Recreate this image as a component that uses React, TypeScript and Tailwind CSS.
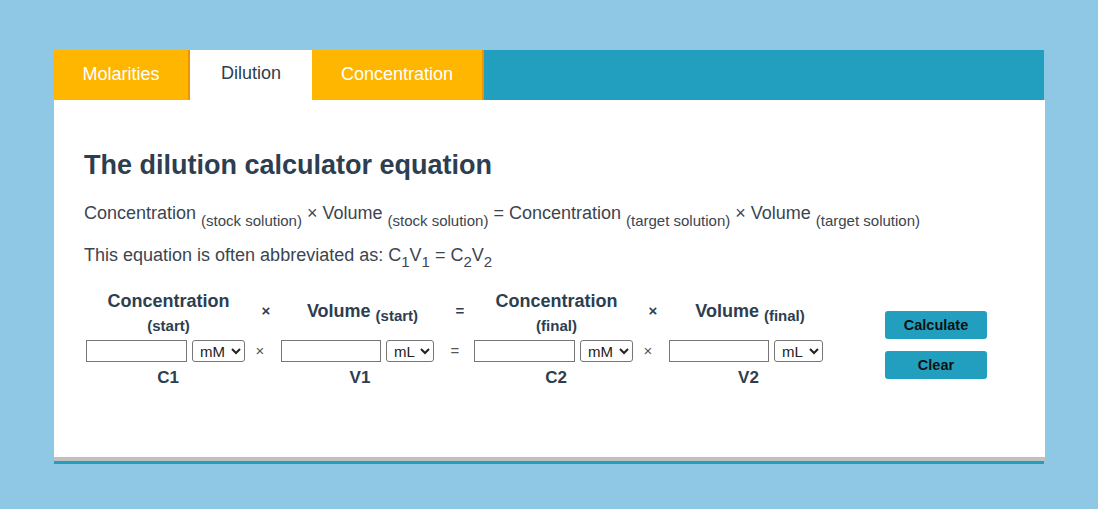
import { ReactNode } from "react";

const tabs = [
  { name: "Molarities", width: "w-[136px]", active: false },
  { name: "Dilution", width: "w-[122px]", active: true },
  { name: "Concentration", width: "w-[172px]", active: false },
];

function HeaderCell({ title, sub, shift }: { title: string; sub: string; shift: string }) {
  return (
    <div
      className={`flex h-[42px] items-center justify-center text-center text-[18px] font-bold leading-[1.15] text-[#2c3e50] ${shift}`}
    >
      <div>
        {title} <sub className="text-[15px]">({sub})</sub>
      </div>
    </div>
  );
}

function Op({ children, head, shift }: { children: ReactNode; head?: boolean; shift: string }) {
  return (
    <div
      className={
        head
          ? `flex h-[42px] items-center justify-center text-[15px] font-bold text-[#2c3e50] ${shift}`
          : `flex h-[22px] items-center justify-center text-[15px] text-[#555] ${shift}`
      }
    >
      {children}
    </div>
  );
}

function Field({ unit, inputW, selectW }: { unit: string; inputW: string; selectW: string }) {
  return (
    <div className="flex h-[22px] items-center">
      <input type="text" className={`h-[22px] ${inputW} border border-[#767676] bg-white`} />
      <select
        defaultValue={unit}
        className={`ml-[5px] h-[22px] ${selectW} rounded-[3px] border border-[#767676] bg-white pl-[3px] text-[15px] text-[#222]`}
      >
        <option>{unit}</option>
      </select>
    </div>
  );
}

function Label({ children }: { children: ReactNode }) {
  return (
    <div className="-mt-[2px] pl-[5px] text-center text-[17px] font-bold leading-[1.15] text-[#2c3e50]">
      {children}
    </div>
  );
}

function Sub({ children }: { children: ReactNode }) {
  return <sub className="-bottom-[0.45em] text-[15px]">{children}</sub>;
}

export default function App() {
  return (
    <div className="min-h-screen w-full bg-[#8ec8e5] pt-[50px] font-['Liberation_Sans',Arial,sans-serif]">
      <div className="ml-[54px] w-[991px]">
        {/* Tabs */}
        <div className="flex h-[50px] w-[990px] bg-[#229fbf]">
          {tabs.map((tab) =>
            tab.active ? (
              <div
                key={tab.name}
                className={`flex ${tab.width} items-center justify-center bg-white pb-[3px] text-[18px] text-[#2c3e50]`}
              >
                {tab.name}
              </div>
            ) : (
              <div
                key={tab.name}
                className={`flex ${tab.width} items-center justify-center border-r-2 border-[#f39200] bg-[#ffb600] pb-[1px] text-[18px] text-white`}
              >
                {tab.name}
              </div>
            )
          )}
        </div>

        {/* Content */}
        <div className="h-[361px] border-b-4 border-[#c0c0c0] bg-white pl-[30px] pt-[50px]">
          <h2 className="text-[27px] font-bold leading-[1.15] text-[#2c3e50]">The dilution calculator equation</h2>

          <p className="mt-[22px] text-[18px] leading-[1.15] text-[#3b4550]">
            Concentration <Sub>(stock solution)</Sub> × Volume <Sub>(stock solution)</Sub> = Concentration{" "}
            <Sub>(target solution)</Sub> × Volume <Sub>(target solution)</Sub>
          </p>

          <p className="mt-[21px] text-[18px] leading-[1.15] text-[#3b4550]">
            This equation is often abbreviated as: C<Sub>1</Sub>V<Sub>1</Sub> = C<Sub>2</Sub>V<Sub>2</Sub>
          </p>

          {/* Calculator */}
          <div className="ml-[2px] mt-[25px] grid grid-cols-[159px_36px_153px_40px_159px_36px_154px_62px_102px] gap-y-[8px]">
            <HeaderCell title="Concentration" sub="start" shift="pl-[6px]" />
            <Op head shift="pl-[6px]">×</Op>
            <HeaderCell title="Volume" sub="start" shift="pl-[10px]" />
            <Op head shift="pl-[12px]">=</Op>
            <HeaderCell title="Concentration" sub="final" shift="pl-[6px]" />
            <Op head shift="pl-[4px]">×</Op>
            <HeaderCell title="Volume" sub="final" shift="pl-[8px]" />
            <div />
            <div className="row-span-3 flex flex-col gap-[12px] pt-[21px]">
              <button className="h-[28px] w-[102px] rounded-[3px] bg-[#229fbf] text-[14.5px] font-bold text-[#111]">
                Calculate
              </button>
              <button className="h-[28px] w-[102px] rounded-[3px] bg-[#229fbf] text-[14.5px] font-bold text-[#111]">
                Clear
              </button>
            </div>

            <Field unit="mM" inputW="w-[101px]" selectW="w-[53px]" />
            <Op shift="pr-[6px]">×</Op>
            <Field unit="mL" inputW="w-[100px]" selectW="w-[48px]" />
            <Op shift="pl-[2px]">=</Op>
            <Field unit="mM" inputW="w-[101px]" selectW="w-[53px]" />
            <Op shift="pr-[6px]">×</Op>
            <Field unit="mL" inputW="w-[100px]" selectW="w-[49px]" />
            <div />

            <Label>C1</Label>
            <div />
            <Label>V1</Label>
            <div />
            <Label>C2</Label>
            <div />
            <Label>V2</Label>
            <div />
          </div>
        </div>
        <div className="h-[3px] w-[990px] bg-[#229fbf]" />
      </div>
    </div>
  );
}
